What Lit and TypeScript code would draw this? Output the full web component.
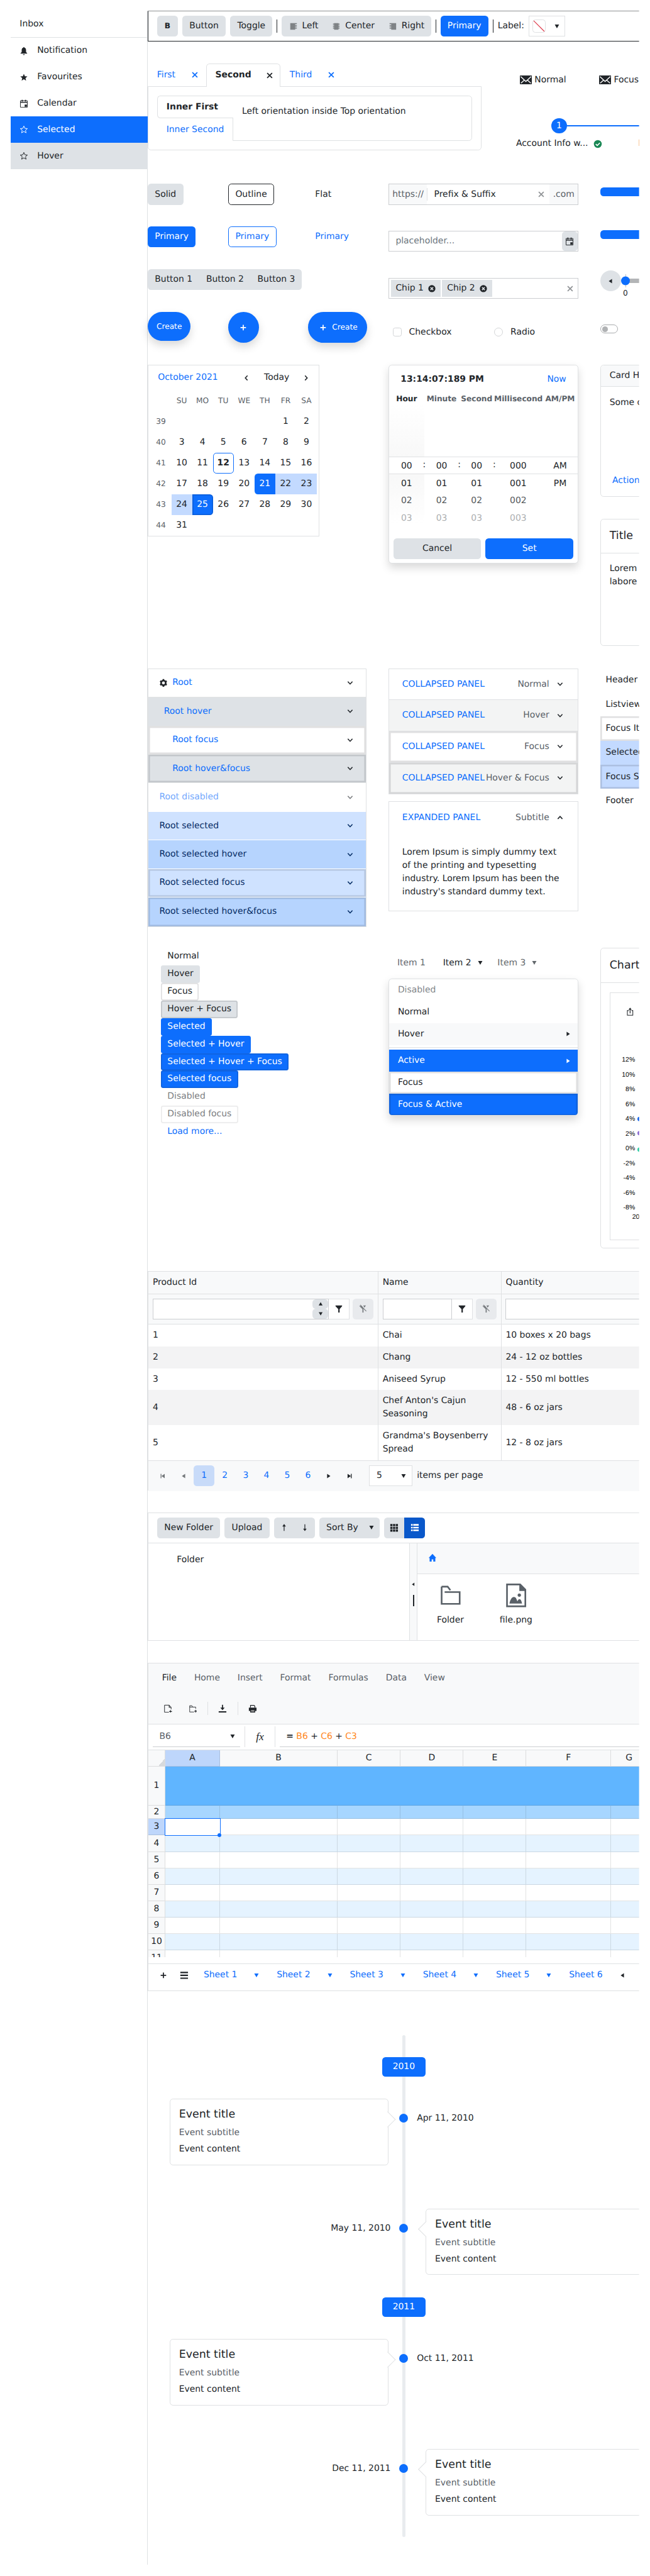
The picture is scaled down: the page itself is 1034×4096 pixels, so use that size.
import { LitElement, html, css, svg, nothing } from "lit";
import { customElement } from "lit/decorators.js";
import { classMap } from "lit/directives/class-map.js";

const line = (d: string, w = 2) =>
  svg`<path d=${d} fill="none" stroke="currentColor" stroke-width=${w} />`;
const fill = (d: string) => svg`<path d=${d} fill="currentColor" fill-rule="evenodd" />`;

const STAR = "M8 1.6l1.9 4.3 4.6.4-3.5 3.1 1.1 4.6L8 11.5 3.9 14 5 9.400 1.500 6.300l4.600-.4z";

const ICONS: Record<string, unknown> = {
  bell: fill("M8 1c.6 0 1 .4 1 1 1.900.5 3 2 3 4.500V10l2 2v1H2v-1l2-2V6.500C4 4 5.100 2.500 7 2c0-.6.4-1 1-1zM6.300 14h3.400a1.700 1.400 0 0 1-3.400 0z"),
  star: fill(STAR),
  starOutline: line(STAR, 1.1),
  calendar: svg`${line("M1.700 2.500h12.600v12H1.700z", 1.1)}${line("M1.500 5.500h13", 1.600)}${fill("M4 1h2v3H4zM10 1h2v3h-2zM9.500 9.500h4v4h-4z")}`,
  x: line("M3.500 3.500l9 9M12.500 3.500l-9 9", 2),
  xCircle: svg`<circle cx="8" cy="8" r="6.500" fill="currentColor" /><path d="M5.500 5.500l5 5M10.500 5.500l-5 5" stroke="#dee2e6" stroke-width="1.800" />`,
  check: svg`<circle cx="8" cy="8" r="7.200" fill="#198754" /><path d="M4.300 8l2.700 2.800 4.800-4.800" stroke="#fff" fill="none" stroke-width="1.900" />`,
  plus: line("M8 3v10M3 8h10", 2),
  down: line("M3.800 5.500L8 10l4.200-4.500", 1.800),
  up: line("M3.800 10.500L8 6l4.200 4.500", 1.800),
  left: line("M10 3.800L6 8l4 4.200", 1.800),
  right: line("M6 3.800L10 8l-4 4.200", 1.800),
  caretDown: fill("M4 4.500h8L8 11.500z"),
  caretUp: fill("M4 11.500h8L8 4.500z"),
  caretLeft: fill("M11 4v8L5 8z"),
  caretRight: fill("M5 4v8l6-4z"),
  first: fill("M4 4h1.500v8H4zM11.500 4v8L5.500 8z"),
  last: fill("M12 4h-1.500v8H12zM4.500 4v8l6-4z"),
  arrowUp: svg`${line("M8 14V3", 1.400)}${fill("M8 1.500l3.200 4.500H4.800z")}`,
  arrowDown: svg`${line("M8 2v11", 1.400)}${fill("M8 14.500l3.200-4.500H4.800z")}`,
  alignLeft: fill("M2 2h12v2h-3v2h3v2.200h-3v1.800h3v2h-3v2H2z"),
  alignCenter: fill("M4 2h8v1h2v2h-2v1.500h2v2h-2V10h2v2h-2v2H4v-2H2v-2h2V8.500H2v-2h2V5H2V3h2z"),
  alignRight: fill("M14 2H2v2h3v2H2v2.200h3v1.800H2v2h3v2h9z"),
  gear: svg`<circle cx="8" cy="8" r="4.200" fill="none" stroke="currentColor" stroke-width="3" /><path d="M8 1v3M8 12v3M2 4.500l2.500 1.500M11.500 10l2.500 1.500M2 11.500L4.500 10M11.500 6L14 4.500" stroke="currentColor" stroke-width="3" />`,
  filter: fill("M2 2h12v1.500L9.500 8.500V15H7V8.500L2 3.500z"),
  filterClear: svg`${fill("M1.500 3h5l3 4.500V15H7.500V8.500zM9 2h5l-3 4z")}${line("M3.500 1l11 11.500", 1.300)}`,
  grid: fill("M1 1.500h4v4H1zM6 1.500h4v4H6zM11 1.500h4v4h-4zM1 6.500h4v4H1zM6 6.500h4v4H6zM11 6.500h4v4h-4zM1 11.500h4v4H1zM6 11.500h4v4H6zM11 11.500h4v4h-4z"),
  list: fill("M1 1.500h3v3H1zM5 1.500h10v3H5zM1 6.500h3v3H1zM5 6.500h10v3H5zM1 11.500h3v3H1zM5 11.500h10v3H5z"),
  home: fill("M8 .8l7 7.500h-1.800V15H9.500v-4h-3v4H2.800V8.300H1z"),
  newFile: svg`${line("M14 9V5.500L10.500 1.500H2v13h8", 1.100)}${line("M10.500 1.500v4H14M13 10.500v5M10.500 13h5", 1.300)}`,
  openFolder: svg`${line("M13 8V5H8L6 2.500H2v11.500h8M2 5h6", 1)}${line("M13 10v5M10.500 12.500h5", 1.200)}`,
  download: svg`${line("M8 1v7", 2)}${fill("M8 10.500L4 6h8zM1 12.500h14v2.500H1z")}`,
  print: svg`${fill("M1 6h14v6h-2.500v3h-9v-3H1z")}${line("M4 6V1.800h6.500L12 3.500V6", 1.300)}${svg`<path d="M5 10.500h6v3H5z" fill="#999" />`}`,
  menu: fill("M1 1.500h14v2.500H1zM1 6.700h14v2.600H1zM1 12h14v2.500H1z"),
  share: svg`${line("M5.500 6H3v8.500h10V6h-2.500", 1.200)}${line("M8 11V3", 1.400)}${fill("M8 .8l3 3.700H5z")}`,
};

const icon = (name: string, cls = "") =>
  html`<svg class="ic ${cls}" viewBox="0 0 16 16">${ICONS[name]}</svg>`;

const CALENDAR: [number, (number | null)[]][] = [
  [39, [null, null, null, null, null, 1, 2]],
  [40, [3, 4, 5, 6, 7, 8, 9]],
  [41, [10, 11, 12, 13, 14, 15, 16]],
  [42, [17, 18, 19, 20, 21, 22, 23]],
  [43, [24, 25, 26, 27, 28, 29, 30]],
  [44, [31, null, null, null, null, null, null]],
];

const PANELS = [
  ["Root", ""], ["Root hover", "hov in1"], ["Root focus", "foc in2"], ["Root hover&focus", "hov foc in2"],
  ["Root disabled", "dis"], ["Root selected", "sel"], ["Root selected hover", "selh"],
  ["Root selected focus", "sel foc"], ["Root selected hover&focus", "selh foc"],
];

const PRODUCTS = [
  ["1", "Chai", "10 boxes x 20 bags"],
  ["2", "Chang", "24 - 12 oz bottles"],
  ["3", "Aniseed Syrup", "12 - 550 ml bottles"],
  ["4", "Chef Anton's Cajun Seasoning", "48 - 6 oz jars"],
  ["5", "Grandma's Boysenberry Spread", "12 - 8 oz jars"],
];

@customElement("app-root")
export class AppRoot extends LitElement {
  static styles = css`
    :host { display: block; height: 4096px; overflow: hidden; background: #fff; }
    * { box-sizing: border-box; }
    .page {
      --line: #dfe1e3; --pri: #0d6efd; --base: #dee2e6; --mute: #596067;
      zoom: 0.8704; width: 1188px; height: 4705px; padding: 20px; display: flex;
      font: 16px/24px "DejaVu Sans", sans-serif; color: #212529; white-space: nowrap;
      text-rendering: geometricPrecision;
    }
    .ic { width: 16px; height: 16px; flex: none; display: block; }
    .blue { color: var(--pri); }
    .row { display: flex; align-items: center; }

    .side { width: 250px; flex: none; border-right: 1px solid var(--line); height: 4665px; }
    .side .inbox { height: 49px; border-bottom: 1px solid var(--line); padding: 0 16px; display: flex; align-items: center; }
    .side .item { height: 48px; padding: 0 16px; display: flex; align-items: center; gap: 16px; margin-right: -1px; }
    .side .on { background: var(--pri); color: #fff; }
    .side .hov { background: var(--base); }

    main { width: 898px; flex: none; clip-path: inset(0 0 0 -20px); display: flex; flex-direction: column; }
    main > * { flex: none; }

    .btn { height: 38px; border-radius: 6px; background: var(--base); padding: 0 13px; display: inline-flex; align-items: center; gap: 8px; }
    .btn.pri { background: var(--pri); color: #fff; }
    .btn.out { background: none; border: 1px solid currentColor; padding: 0 12px; }
    .btn.flat { background: none; }
    .btn.sq { width: 38px; padding: 0; justify-content: center; }
    .btn.drop { padding-right: 7px; gap: 16px; }
    .group { display: inline-flex; background: var(--base); border-radius: 6px; }
    .group .btn { background: none; margin-right: -1px; }
    .al { color: #7f8386; }

    .toolbar { height: 56px; width: 1400px; border: 1px solid #212529; padding: 0 16px; display: flex; align-items: center; gap: 8px; }
    .sep { width: 1px; height: 24px; background: #212529; }
    .bold { font-weight: 700; font-size: 14px; }
    .picker { width: 67px; height: 38px; border: 1px solid var(--line); display: flex; align-items: center; padding: 0 6px; justify-content: space-between; }
    .swatch { width: 24px; height: 24px; border: 1px solid var(--line); border-radius: 5px; display: block; }

    .rowA { margin-top: 40px; height: 159px; display: flex; gap: 40px; }
    .tabs { width: 610px; flex: none; }
    .tabbar { display: flex; height: 42px; align-items: stretch; position: relative; z-index: 1; }
    .tab { padding: 0 12px 0 17px; display: flex; align-items: center; justify-content: space-between; color: var(--pri); }
    .tab.t1 { width: 106.500px; } .tab.t3 { width: 113px; }
    .tab.act { width: 136px; border: 1px solid var(--line); border-bottom: none; border-radius: 6px 6px 0 0; color: #212529; font-weight: 700; padding: 0 11px 0 16px; background: #fff; }
    .tabbody { height: 118px; margin-top: -1px; border: 1px solid var(--line); border-radius: 0 0 6px 6px; padding: 16px; display: flex; }
    .vtabs { width: 139px; flex: none; margin-right: -1px; position: relative; }
    .vtab { height: 42px; padding: 1px 0 0 17px; display: flex; align-items: center; color: var(--pri); }
    .vtab.act { border: 1px solid var(--line); border-right: none; border-radius: 6px 0 0 6px; padding-left: 16px; background: #fff; font-weight: 700; color: #212529; }
    .vbody { flex: 1; border: 1px solid var(--line); border-radius: 0 6px 6px 0; padding: 17px 16px; }
    .rightA { width: 500px; flex: none; }
    .nav { display: flex; gap: 60px; padding: 18px 0 0 30px; }
    .nav .row { gap: 5px; height: 24px; }
    .mail { width: 22px; height: 16px; display: block; }
    .steps { display: flex; margin-top: 58px; }
    .step { width: 204px; flex: none; display: flex; flex-direction: column; align-items: center; }
    .dotline { display: flex; align-items: center; width: 100%; height: 28px; }
    .dotline .h1 { flex: 1; } .dotline .h2 { flex: 1; height: 2px; background: var(--pri); }
    .num { width: 28px; height: 28px; border-radius: 50%; background: var(--pri); color: #fff; text-align: center; line-height: 28px; }
    .steplabel { display: flex; gap: 10px; margin-top: 7px; align-items: center; }
    .red { color: #dc3545; font-weight: 700; }

    .cols { display: grid; grid-template-columns: 400px 347px 500px; column-gap: 40px; align-items: start; }
    .rowB { margin-top: 61px; height: 290px; }
    .bgrid { display: grid; grid-template-columns: 147px 146px auto; grid-template-rows: repeat(4, 78px); justify-items: start; align-items: start; }
    .wide { grid-column: 1 / -1; }
    .fab { background: var(--pri); color: #fff; font-size: 14px; border-radius: 99px; height: 56px; display: flex; align-items: center; gap: 8px; padding: 0 17px 0 20px; box-shadow: 0 8px 16px rgba(0, 0, 0, 0.15); }
    .fab.a { height: 53px; padding: 0 16px; } .fab.b { width: 56px; padding: 0 20px; }
    .inputs { display: grid; grid-template-rows: repeat(4, 86px); }
    .input { height: 38px; border: 1px solid #ccced1; display: flex; align-items: center; }
    .input.chips { padding: 0 6px 0 3px; }
    .addon { background: #f8f9fa; align-self: stretch; display: flex; align-items: center; padding: 0 6px; color: var(--mute); }
    .vs { width: 1px; height: 24px; background: var(--line); }
    .vs.end { margin-left: 6px; }
    .grow { flex: 1; }
    .val { flex: 1; padding-left: 12px; }
    .ph { color: #6c757d; }
    .gray { color: #919497; }
    .chip { background: var(--base); height: 31px; padding: 0 8px 0 9px; display: flex; align-items: center; width: 91px; justify-content: space-between; margin-right: 3px; }
    .calbtn { width: 29px; height: 36px; border-radius: 6px; background: var(--base); display: flex; align-items: center; justify-content: center; }
    .checks { display: flex; height: 26px; align-items: center; padding-left: 8px; }
    .cb { width: 16px; height: 16px; border: 1px solid #d3d5d7; border-radius: 4px; margin-right: 13.500px; }
    .cb.r { border-radius: 50%; margin-right: 14px; }
    .cl { width: 155.500px; }
    .bars { display: flex; flex-direction: column; align-items: flex-start; }
    .bar { height: 16px; width: 300px; background: var(--pri); border-radius: 6px; margin-top: 6px; }
    .bar.two { margin-top: 63px; }
    .slider { margin-top: 57px; display: flex; height: 50px; }
    .round { width: 38px; height: 38px; border-radius: 50%; background: var(--base); display: flex; align-items: center; justify-content: center; }
    .slidebody svg { display: block; }
    .slidebody { font-size: 14px; }
    .zero { width: 16px; text-align: center; margin-top: -8px; }
    .switch { margin-top: 49px; width: 32px; height: 16px; border: 1px solid #a9abad; border-radius: 8px; padding: 2px 3px; }
    .knob { width: 10px; height: 10px; border-radius: 50%; background: #b0b2b4; }

    .rowC { margin-top: 40px; height: 515px; }
    .calendar { width: 314px; height: 314px; border: 1px solid var(--line); padding: 0 4px; }
    .calhead { height: 46px; display: flex; align-items: center; padding: 0 11px 0 13.500px; }
    .calhead .t { margin: 0 23px 0 24px; }
    .cal { display: grid; grid-template-columns: repeat(8, 38px); grid-auto-rows: 38px; text-align: center; line-height: 38px; }
    .cal .s { font-size: 14px; color: var(--mute); }
    .today { border: 1px solid var(--pri); border-radius: 6px; font-weight: 700; line-height: 36px; }
    .rng { background: #c3daff; }
    .st { background: var(--pri); color: #fff; border-radius: 6px 0 0 6px; }
    .en { background: var(--pri); color: #fff; border-radius: 0 6px 6px 0; box-shadow: inset 0 0 0 2px rgba(0, 0, 0, 0.13); }
    .time { height: 363px; border: 1px solid var(--line); border-radius: 6px; box-shadow: 0 8px 16px rgba(0, 0, 0, 0.15); background: #fff; }
    .thead { height: 52px; display: flex; align-items: center; justify-content: space-between; padding: 0 21px; font-weight: 700; }
    .thead .blue { font-weight: 400; }
    .tcols { display: grid; grid-template-columns: 64px 64px 64px 88px 65px; text-align: center; }
    .tlab { font-size: 14px; font-weight: 700; line-height: 20px; height: 20px; color: var(--mute); }
    .tlab.on { color: #212529; }
    .tbody { height: 236px; }
    .tc { padding-top: 97px; height: 218px; line-height: 32px; position: relative; }
    .tc.on { background: linear-gradient(#fff, #f8f8f8 45%, #f8f8f8 60%, #fff); }
    .tc div { position: relative; z-index: 1; }
    .tc .f2 { color: #54585b; } .tc .f3 { color: #adafb1; }
    .hlz { background: #fff; border: solid var(--line); border-width: 1px 0; position: absolute; left: 0; right: 0; top: 95px; height: 32px; }
    .colon { position: absolute; right: -3px; top: -2px; }
    .tfoot { display: grid; grid-template-columns: 160px 161px; gap: 8px; padding: 8px; }
    .tfoot .btn { justify-content: center; }
    .card { border: 1px solid var(--line); border-radius: 6px; }
    .c1 { height: 241.500px; display: flex; flex-direction: column; }
    .c1 .hd { height: 40px; background: #f8f9fa; border-bottom: 1px solid var(--line); border-radius: 6px 6px 0 0; padding: 0 16px; display: flex; align-items: center; }
    .c1 .bd { padding: 17px 16px 0; flex: 1; } .c1 .act { padding: 0 21px 16px; color: var(--pri); }
    .c2 { height: 233px; margin-top: 40px; }
    .c2 .hd, .chart .hd { height: 63px; border-bottom: 1px solid var(--line); padding: 0 16px; font-size: 20px; display: flex; align-items: center; }
    .c2 .bd { padding: 16px; white-space: pre; }

    .rowD { margin-top: 40px; height: 471px; }
    .panel { border: 1px solid var(--line); }
    .p { height: 52.200px; border-bottom: 1px solid #e1e3e4; padding: 0 21px 0 20px; display: flex; align-items: center; color: var(--pri); }
    .p:last-child { border-bottom: none; }
    .p .ic:last-child { margin-left: auto; color: #212529; }
    .p .ic:first-child { margin-right: 8px; color: #212529; }
    .p.hov { background: var(--base); } .p.in1 { padding-left: 28.500px; } .p.in2 { padding-left: 44px; }
    .p.dis { opacity: 0.6; border-color: transparent; }
    .p.sel, .p.selh { background: #cfe2ff; color: #052c65; border-color: #fff; } .p.selh { background: #b6d4fe; }
    .p.sel .ic:last-child, .p.selh .ic:last-child { color: #052c65; }
    .foc { box-shadow: inset 0 0 0 3px rgba(33, 37, 41, 0.14); }
    .exp { border: 1px solid var(--line); }
    .e { height: 57px; border-bottom: 1px solid var(--line); padding: 0 24px; display: flex; align-items: center; justify-content: space-between; color: var(--pri); }
    .e:last-child, .e.open { border: none; }
    .e.h { background: #f3f4f4; }
    .e .row { gap: 12px; color: #212529; } .e .row span { color: var(--mute); }
    .exp.two { margin-top: 13px; height: 201px; }
    .exp.two p { margin: 23px 24px 0; white-space: normal; width: 296px; }
    .lv div { height: 44px; padding: 0 10px; display: flex; align-items: center; }
    .lv .s { background: #c3daff; }

    .rowE { margin-top: 40px; height: 549px; }
    .ml { padding-left: 24px; display: flex; flex-direction: column; align-items: flex-start; }
    .ml div { height: 32px; padding: 0 12px; line-height: 32px; border-radius: 4px; }
    .ml .h { background: var(--base); } .ml .s { background: var(--pri); color: #fff; }
    .ml .f { box-shadow: inset 0 0 0 2px rgba(33, 37, 41, 0.14); }
    .ml .d { opacity: 0.6; }
    .menu { display: flex; padding: 15px 0 0 16px; color: #63686c; }
    .menu .row { gap: 8px; } .menu .k { color: #212529; margin: 0 24px 0 32px; }
    .pop { border: 1px solid var(--line); border-radius: 6px; margin-top: 17px; overflow: hidden; height: 250px; }
    .popwrap { border-radius: 6px; box-shadow: 0 8px 16px rgba(0, 0, 0, 0.15); }
    .pop div { height: 40px; padding: 0 9px 0 16px; display: flex; align-items: center; justify-content: space-between; }
    .pop .d { color: #808589; } .pop .h { background: #f8f9fa; } .pop .a { background: var(--pri); color: #fff; }
    .pop hr { border: none; height: 1px; background: var(--line); margin: 4px 0; }
    .pop .fo { box-shadow: inset 0 0 0 3px rgba(33, 37, 41, 0.14); }
    .chart { height: 549px; }
    .chart .box { margin: 17px 16px 0; height: 453px; border: 1px solid var(--line); }
    .chart text { font: 12px "Liberation Sans", sans-serif; }

    .grid { margin-top: 41px; height: 401px; border: 1px solid var(--line); border-right: none; }
    .gr { display: grid; grid-template-columns: 419px 225px 300px; }
    .gr > div { padding: 8px; border-left: 1px solid var(--line); display: flex; align-items: center; white-space: normal; }
    .gr > div:first-child { border-left: none; }
    .gh { background: #f8f9fa; height: 41px; border-bottom: 1px solid var(--line); }
    .gf { background: #f8f9fa; height: 55px; border-bottom: 1px solid var(--line); }
    .gb { height: 40.200px; } .gb.tall { height: 64px; } .gb:nth-child(even) { background: #f3f3f4; }
    .gin { height: 38px; border: 1px solid #ccced1; background: #fff; flex: 1; display: flex; justify-content: flex-end; }
    .fb { width: 38px; height: 38px; border: 1px solid var(--line); border-left: none; background: #fff; display: flex; align-items: center; justify-content: center; }
    .fc { width: 38px; height: 38px; border-radius: 6px; background: #e8eaed; margin-left: 5px; color: #777b7f; display: flex; align-items: center; justify-content: center; }
    .spin { width: 29px; display: flex; flex-direction: column; }
    .spin span { flex: 1; background: var(--base); border-radius: 6px; display: flex; align-items: center; justify-content: center; }
    .spin .ic { width: 14px; height: 14px; }
    .pager { background: #f8f9fa; border-top: 1px solid var(--line); height: 56px; display: flex; align-items: center; padding-left: 7px; }
    .pg { width: 38px; height: 38px; display: flex; align-items: center; justify-content: center; color: var(--pri); border-radius: 6px; }
    .pg.k { color: #212529; } .pg.d { color: #74787b; } .pg.on { background: #c8dbf9; }
    .dd { width: 80px; height: 38px; border: 1px solid var(--line); background: #fff; margin: 0 8px 0 16px; padding: 0 7px 0 13px; display: flex; align-items: center; justify-content: space-between; }

    .fm { margin-top: 40px; height: 234px; border: 1px solid var(--line); border-right: none; }
    .fmbar { height: 55px; border-bottom: 1px solid var(--line); display: flex; align-items: center; gap: 8px; padding-left: 16px; }
    .fmbar .group .btn.sq { width: 37.500px; margin: 0; }
    .fmbar .group .on { background: #0a58ca; color: #fff; border-radius: 0 6px 6px 0; }
    .fmbody { display: flex; height: 177px; }
    .tree { width: 477px; padding: 19px 52px; }
    .split { width: 15px; background: #f8f9fa; border: solid var(--line); border-width: 0 1px; display: flex; flex-direction: column; align-items: center; padding-top: 69px; }
    .split i { width: 2px; height: 20px; background: #212529; margin-top: 14px; }
    .split .ic { width: 12px; height: 12px; }
    .files { flex: 1; }
    .crumb { height: 57px; border-bottom: 1px solid var(--line); background: #f8f9fa; padding: 19px; }
    .fl { display: flex; }
    .fl div { width: 120px; display: flex; flex-direction: column; align-items: center; padding-top: 14px; gap: 10px; }
    .fl svg { width: 48px; height: 48px; color: #596067; }

    .ss { margin-top: 41px; height: 600px; border: 1px solid var(--line); border-right: none; }
    .sstop { background: #f8f9fa; height: 111px; border-bottom: 1px solid var(--line); }
    .sstabs { display: flex; padding: 15px 0 0 25px; gap: 32px; color: #596067; height: 55px; }
    .sstabs .k { color: #212529; }
    .ssicons { display: flex; align-items: center; height: 54px; padding-left: 28px; gap: 19px; }
    .ssicons i { width: 1px; height: 24px; background: var(--line); }
    .ssicons .ic:first-child { margin-right: 10px; }
    .fx { height: 47px; border-bottom: 1px solid var(--line); display: flex; padding: 4px 0 4px 8px; }
    .cell { width: 160px; border-bottom: 1px solid #ccced1; display: flex; align-items: center; justify-content: space-between; padding: 0 6px 0 12px; color: var(--mute); margin-right: 8px; }
    .cell .ic { color: #212529; }
    .fxi { width: 56px; border: solid var(--line); border-width: 0 1px; display: flex; align-items: center; justify-content: center; font: italic 20px/24px "Liberation Serif", serif; margin-right: 8px; }
    .formula { flex: 1; border-bottom: 1px solid #ccced1; display: flex; align-items: center; padding-left: 12px; white-space: pre; }
    .o { color: #ff8822; }
    .sheet { height: 378px; overflow: hidden; width: 912px; }
    .sr { display: grid; grid-template-columns: 31px 100px 215px 115px 115px 115px 155px 66px; height: 30px; }
    .sr > div { border: solid rgba(33, 37, 41, 0.13); border-width: 0 1px 1px 0; display: flex; align-items: center; justify-content: center; }
    .sr.hd > div, .sr > div:first-child { background: #f8f9fa; }
    .sr.hd > div.on, .sr.r3 > div.on { background: #bed6fb; }
    .sr.even { background: #e5f3ff; }
    .sr.r1 { height: 71px; background: #60b5ff; } .sr.r1 > div + div { border-right-color: transparent; }
    .sr.r2 { height: 25px; background: #a7d6ff; }
    .sr > div.cur { outline: 2px solid var(--pri); outline-offset: -1px; border-color: transparent; position: relative; }
    .cur::after { content: ""; position: absolute; right: -4px; bottom: -4px; width: 7px; height: 7px; border-radius: 50%; background: var(--pri); }
    .sr.hd > div.corner { background: linear-gradient(to bottom right, transparent 50%, #d7dadd 50%) no-repeat right bottom / 12px 14px #f8f9fa; }
    .sheets { border-top: 1px solid var(--line); margin-top: 12px; height: 50px; padding: 8px 0 0 19px; display: flex; color: var(--pri); }
    .sheets .ic { margin-top: 5px; }
    .sheets .k { color: #212529; }
    .sheets .add { margin-right: 22px; } .sheets .all { margin-right: 28px; }
    .sheets span { width: 89px; } .sheets .dn { margin-right: 28.600px; }

    .tl { margin-top: 40px; height: 1008px; position: relative; padding-top: 80px; }
    .track { position: absolute; left: 465px; top: 40px; width: 6px; height: 917px; border-radius: 3px; background: #e9ecef; }
    .flag { position: relative; margin-left: 428px; width: 80px; height: 36px; border-radius: 6px; background: var(--pri); color: #fff; line-height: 35px; text-align: center; }
    .ev { position: relative; display: grid; grid-template-columns: 440px 56px 412px; height: 121px; margin-top: 80px; }
    .flag + .ev { margin-top: 40px; }
    .ev + .flag { margin-top: 41px; }
    .evc { position: relative; width: 400px; border: 1px solid var(--line); border-radius: 6px; padding: 16px; background: #fff; }
    .evc b { font-weight: 400; font-size: 20px; display: block; margin-bottom: 9px; }
    .evc span { color: var(--mute); display: block; margin-bottom: 6px; }
    .evc::before { content: ""; position: absolute; top: 26px; width: 19px; height: 19px; background: #fff; border: solid var(--line); border-width: 1px 1px 0 0; transform: rotate(45deg); }
    .lft { margin-left: 40px; } .lft::before { right: -10px; }
    .rgt { margin-left: 12px; } .rgt::before { left: -10px; transform: rotate(-135deg); }
    .dot { width: 16px; height: 16px; border-radius: 50%; background: var(--pri); margin: 28px auto 0; }
    .date { margin: 24px -4px 0; }
    .date.r { text-align: right; }
  `;

  private calCell(d: number | null) {
    const c = { today: d === 12, st: d === 21, en: d === 25, rng: d !== null && [22, 23, 24].includes(d) };
    return html`<div class=${classMap(c)}>${d ?? nothing}</div>`;
  }

  private event(date: string, left: boolean) {
    const card = html`<div class="evc ${left ? "lft" : "rgt"}"><b>Event title</b><span>Event subtitle</span>Event content</div>`;
    const when = html`<div class="date ${left ? "" : "r"}">${date}</div>`;
    return html`<div class="ev">${left ? card : when}<div class="dot"></div>${left ? when : card}</div>`;
  }

  private top() {
    return html`
      <div class="toolbar">
        <span class="btn sq bold">B</span><span class="btn">Button</span><span class="btn">Toggle</span>
        <span class="sep"></span>
        <span class="group">
          <span class="btn">${icon("alignLeft", "al")}Left</span>
          <span class="btn">${icon("alignCenter", "al")}Center</span>
          <span class="btn">${icon("alignRight", "al")}Right</span>
        </span>
        <span class="sep"></span><span class="btn pri">Primary</span><span class="sep"></span>
        <span>Label:</span>
        <span class="picker">
          <svg class="swatch" viewBox="0 0 22 22"><path d="M1 1l20 20" stroke="#dc3545" stroke-width="1.300" /></svg>
          ${icon("caretDown")}
        </span>
      </div>
      <div class="rowA">
        <div class="tabs">
          <div class="tabbar">
            <div class="tab t1">First${icon("x")}</div>
            <div class="tab act">Second${icon("x")}</div>
            <div class="tab t3">Third${icon("x")}</div>
          </div>
          <div class="tabbody">
            <div class="vtabs"><div class="vtab act">Inner First</div><div class="vtab">Inner Second</div></div>
            <div class="vbody">Left orientation inside Top orientation</div>
          </div>
        </div>
        <div class="rightA">
          <div class="nav">
            ${["Normal", "Focus"].map((t) => html`<div class="row">
              <svg class="mail" viewBox="0 0 22 16"><rect width="22" height="16" rx="1" fill="#212529" /><path d="M1.500 2l9.500 9 9.500-9M2 14l6-5.500M20 14l-6-5.500" fill="none" stroke="#fff" stroke-width="1.600" /></svg>${t}</div>`)}
          </div>
          <div class="steps">
            <div class="step">
              <div class="dotline"><span class="h1"></span><span class="num">1</span><span class="h2"></span></div>
              <div class="steplabel"><span>Account Info w...</span>${icon("check")}</div>
            </div>
            <div class="step">
              <div class="dotline"><span class="h2"></span><span class="num">2</span><span class="h1"></span></div>
              <div class="steplabel red">Personal Info</div>
            </div>
          </div>
        </div>
      </div>`;
  }

  private controls() {
    return html`<div class="cols rowB">
      <div class="bgrid">
        <span class="btn">Solid</span><span class="btn out">Outline</span><span class="btn flat">Flat</span>
        <span class="btn pri">Primary</span><span class="btn out blue">Primary</span><span class="btn flat blue">Primary</span>
        <span class="group wide"><span class="btn">Button 1</span><span class="btn">Button 2</span><span class="btn">Button 3</span></span>
        <span class="fab a">Create</span><span class="fab b">${icon("plus")}</span><span class="fab">${icon("plus")}Create</span>
      </div>
      <div class="inputs">
        <div class="input">
          <span class="addon">https://</span><span class="vs"></span>
          <span class="val">Prefix &amp; Suffix</span>${icon("x", "gray")}
          <span class="vs end"></span><span class="addon">.com</span>
        </div>
        <div class="input"><span class="val ph">placeholder...</span><span class="calbtn">${icon("calendar")}</span></div>
        <div class="input chips">
          <span class="chip">Chip 1${icon("xCircle")}</span><span class="chip">Chip 2${icon("xCircle")}</span>
          <span class="grow"></span>${icon("x", "gray")}
        </div>
        <div class="checks"><span class="cb"></span><span class="cl">Checkbox</span><span class="cb r"></span>Radio</div>
      </div>
      <div class="bars">
        <div class="bar"></div><div class="bar two"></div>
        <div class="slider">
          <span class="round">${icon("caretLeft")}</span>
          <div class="slidebody">
            <svg width="200" height="38" viewBox="0 0 200 38"><path d="M8.500 7v24" stroke="#b3b5b7" /><path d="M8 15h192v8H8z" fill="#b3b5b7" /><circle cx="8" cy="19" r="8" fill="#0d6efd" /></svg>
            <div class="zero">0</div>
          </div>
        </div>
        <div class="switch"><div class="knob"></div></div>
      </div>
    </div>`;
  }

  private pickers() {
    const cols = [["Hour", "0"], ["Minute", "0"], ["Second", "0"], ["Millisecond", "00"], ["AM/PM", ""]];
    return html`<div class="cols rowC">
      <div class="calendar">
        <div class="calhead"><span class="blue grow">October 2021</span>${icon("left")}<span class="t">Today</span>${icon("right")}</div>
        <div class="cal">
          <div></div>${["SU", "MO", "TU", "WE", "TH", "FR", "SA"].map((d) => html`<div class="s">${d}</div>`)}
          ${CALENDAR.map(([w, days]) => html`<div class="s">${w}</div>${days.map((d) => this.calCell(d))}`)}
        </div>
      </div>
      <div class="time">
        <div class="thead"><span>13:14:07:189 PM</span><span class="blue">Now</span></div>
        <div class="tcols">${cols.map(([l], i) => html`<div class="tlab ${i ? "" : "on"}">${l}</div>`)}</div>
        <div class="tbody">
          <div class="tcols">
            ${cols.map(([, p], i) => html`<div class="tc ${i ? "" : "on"}">
              <span class="hlz"></span>
              ${p
                ? [0, 1, 2, 3].map((n) => html`<div class="f${n}">${p}${n}${n === 0 && i < 3 ? html`<span class="colon">:</span>` : nothing}</div>`)
                : html`<div>AM</div><div>PM</div>`}
            </div>`)}
          </div>
        </div>
        <div class="tfoot"><span class="btn">Cancel</span><span class="btn pri">Set</span></div>
      </div>
      <div>
        <div class="card c1"><div class="hd">Card Header</div><div class="bd">Some content</div><div class="act">Action 1</div></div>
        <div class="card c2"><div class="hd">Title</div><div class="bd">Lorem ipsum dolor sit amet
labore et dolore magna</div></div>
      </div>
    </div>`;
  }

  private panels() {
    return html`<div class="cols rowD">
      <div class="panel">
        ${PANELS.map(([t, c], i) => html`<div class="p ${c}">${i ? nothing : icon("gear")}<span>${t}</span>${icon("down")}</div>`)}
      </div>
      <div>
        <div class="exp">
          ${[["Normal", ""], ["Hover", "h"], ["Focus", "foc"], ["Hover & Focus", "h foc"]].map(
            ([t, c]) => html`<div class="e ${c}"><span>COLLAPSED PANEL</span><div class="row"><span>${t}</span>${icon("down")}</div></div>`)}
        </div>
        <div class="exp two">
          <div class="e open"><span>EXPANDED PANEL</span><div class="row"><span>Subtitle</span>${icon("up")}</div></div>
          <p>Lorem Ipsum is simply dummy text of the printing and typesetting industry. Lorem Ipsum has been the industry's standard dummy text.</p>
        </div>
      </div>
      <div class="lv">
        <div>Header</div><div>Listview Item</div><div class="foc">Focus Item</div><div class="s">Selected Item</div>
        <div class="s foc">Focus Selected</div><div>Footer</div>
      </div>
    </div>`;
  }

  private lists() {
    const items = [["Normal", ""], ["Hover", "h"], ["Focus", "f"], ["Hover + Focus", "h f"], ["Selected", "s"],
      ["Selected + Hover", "s"], ["Selected + Hover + Focus", "s f"], ["Selected focus", "s f"], ["Disabled", "d"],
      ["Disabled focus", "d f"], ["Load more...", "blue"]];
    const ticks = [12, 10, 8, 6, 4, 2, 0, -2, -4, -6, -8];
    return html`<div class="cols rowE">
      <div class="ml">${items.map(([t, c]) => html`<div class=${c}>${t}</div>`)}</div>
      <div>
        <div class="menu"><span>Item 1</span><span class="row k">Item 2${icon("caretDown")}</span><span class="row">Item 3${icon("caretDown")}</span></div>
        <div class="popwrap"><div class="pop">
          <div class="d">Disabled</div><div>Normal</div><div class="h">Hover${icon("caretRight")}</div>
          <hr />
          <div class="a">Active${icon("caretRight")}</div><div class="fo">Focus</div><div class="a fo">Focus &amp; Active</div>
        </div></div>
      </div>
      <div class="card chart">
        <div class="hd">Chart</div>
        <div class="box">
          <svg width="300" height="450" viewBox="0 0 300 450">
            <g transform="translate(28 26)">${ICONS.share}</g>
            ${ticks.map((t, i) => svg`<text x="45" y=${125.500 + i * 27} text-anchor="end">${t}%</text>`)}
            <text x="40" y="412">2011</text>
            <circle cx="53.500" cy="230" r="4" fill="#0058e9" /><circle cx="53.500" cy="256" r="4" fill="#7f5ccf" /><circle cx="53.500" cy="286" r="4" fill="#21c89d" />
          </svg>
        </div>
      </div>
    </div>`;
  }

  private grid() {
    const f = html`<span class="fb">${icon("filter")}</span><span class="fc">${icon("filterClear")}</span>`;
    return html`<div class="grid">
      <div class="gr gh"><div>Product Id</div><div>Name</div><div>Quantity</div></div>
      <div class="gr gf">
        <div><span class="gin"><span class="spin"><span>${icon("caretUp")}</span><span>${icon("caretDown")}</span></span></span>${f}</div>
        <div><span class="gin"></span>${f}</div><div><span class="gin"></span></div>
      </div>
      <div>${PRODUCTS.map((r, i) => html`<div class="gr gb ${i > 2 ? "tall" : ""}">${r.map((c) => html`<div>${c}</div>`)}</div>`)}</div>
      <div class="pager">
        <span class="pg d">${icon("first")}</span><span class="pg d">${icon("caretLeft")}</span>
        ${[1, 2, 3, 4, 5, 6].map((n) => html`<span class="pg ${n === 1 ? "on" : ""}">${n}</span>`)}
        <span class="pg k">${icon("caretRight")}</span><span class="pg k">${icon("last")}</span>
        <span class="dd">5${icon("caretDown")}</span>items per page
      </div>
    </div>`;
  }

  private files() {
    return html`<div class="fm">
      <div class="fmbar">
        <span class="btn">New Folder</span><span class="btn">Upload</span>
        <span class="group"><span class="btn sq">${icon("arrowUp")}</span><span class="btn sq">${icon("arrowDown")}</span></span>
        <span class="btn drop">Sort By${icon("caretDown")}</span>
        <span class="group"><span class="btn sq">${icon("grid")}</span><span class="btn sq on">${icon("list")}</span></span>
      </div>
      <div class="fmbody">
        <div class="tree">Folder</div>
        <div class="split">${icon("caretLeft")}<i></i></div>
        <div class="files">
          <div class="crumb blue">${icon("home")}</div>
          <div class="fl">
            <div><svg viewBox="0 0 48 48"><path d="M7.500 9h11l5 6.500M13 19h27.500v21.500h-33V9" fill="none" stroke="currentColor" stroke-width="3" /></svg>Folder</div>
            <div><svg viewBox="0 0 48 48"><path d="M7.500 5h24L41 14.500V45H7.500z" fill="none" stroke="currentColor" stroke-width="3" /><path d="M30 5l12 12H30z" fill="currentColor" /><circle cx="30" cy="24.500" r="3" fill="currentColor" /><path d="M12 40c1-6 4-12 8-12s5 4 6.500 8c1-2 2-4 4-4s4 4 4.500 8z" fill="currentColor" /></svg>file.png</div>
          </div>
        </div>
      </div>
    </div>`;
  }

  private sheet() {
    const blank = [0, 1, 2, 3, 4, 5];
    return html`<div class="ss">
      <div class="sstop">
        <div class="sstabs"><span class="k">File</span>${["Home", "Insert", "Format", "Formulas", "Data", "View"].map((t) => html`<span>${t}</span>`)}</div>
        <div class="ssicons">${icon("newFile")}${icon("openFolder")}<i></i>${icon("download")}<i></i>${icon("print")}</div>
      </div>
      <div class="fx">
        <div class="cell">B6${icon("caretDown")}</div><div class="fxi">fx</div>
        <div class="formula"><span><b>=</b> <span class="o">B6</span> + <span class="o">C6</span> + <span class="o">C3</span></span></div>
      </div>
      <div class="sheet">
        <div class="sr hd"><div class="corner"></div>${["A", "B", "C", "D", "E", "F", "G"].map((c) => html`<div class=${c === "A" ? "on" : ""}>${c}</div>`)}</div>
        ${[1, 2, 3, 4, 5, 6, 7, 8, 9, 10, 11].map((n) => html`<div class="sr r${n} ${n > 3 && n % 2 === 0 ? "even" : ""}">
          <div class=${n === 3 ? "on" : ""}>${n}</div><div class=${n === 3 ? "cur" : ""}></div>${blank.map(() => html`<div></div>`)}
        </div>`)}
      </div>
      <div class="sheets">
        ${icon("plus", "k add")}${icon("menu", "k all")}
        ${[1, 2, 3, 4, 5, 6].map((n) => html`<span>Sheet ${n}</span>${n < 6 ? icon("caretDown", "dn") : icon("caretLeft", "k")}`)}
      </div>
    </div>`;
  }

  render() {
    return html`<div class="page">
      <div class="side">
        <div class="inbox">Inbox</div>
        <div class="item">${icon("bell")}Notification</div>
        <div class="item">${icon("star")}Favourites</div>
        <div class="item">${icon("calendar")}Calendar</div>
        <div class="item on">${icon("starOutline")}Selected</div>
        <div class="item hov">${icon("starOutline")}Hover</div>
      </div>
      <main>
        ${this.top()}${this.controls()}${this.pickers()}${this.panels()}${this.lists()}${this.grid()}${this.files()}${this.sheet()}
        <div class="tl">
          <div class="track"></div>
          <div class="flag">2010</div>
          ${this.event("Apr 11, 2010", true)}${this.event("May 11, 2010", false)}
          <div class="flag">2011</div>
          ${this.event("Oct 11, 2011", true)}${this.event("Dec 11, 2011", false)}
        </div>
      </main>
    </div>`;
  }
}
